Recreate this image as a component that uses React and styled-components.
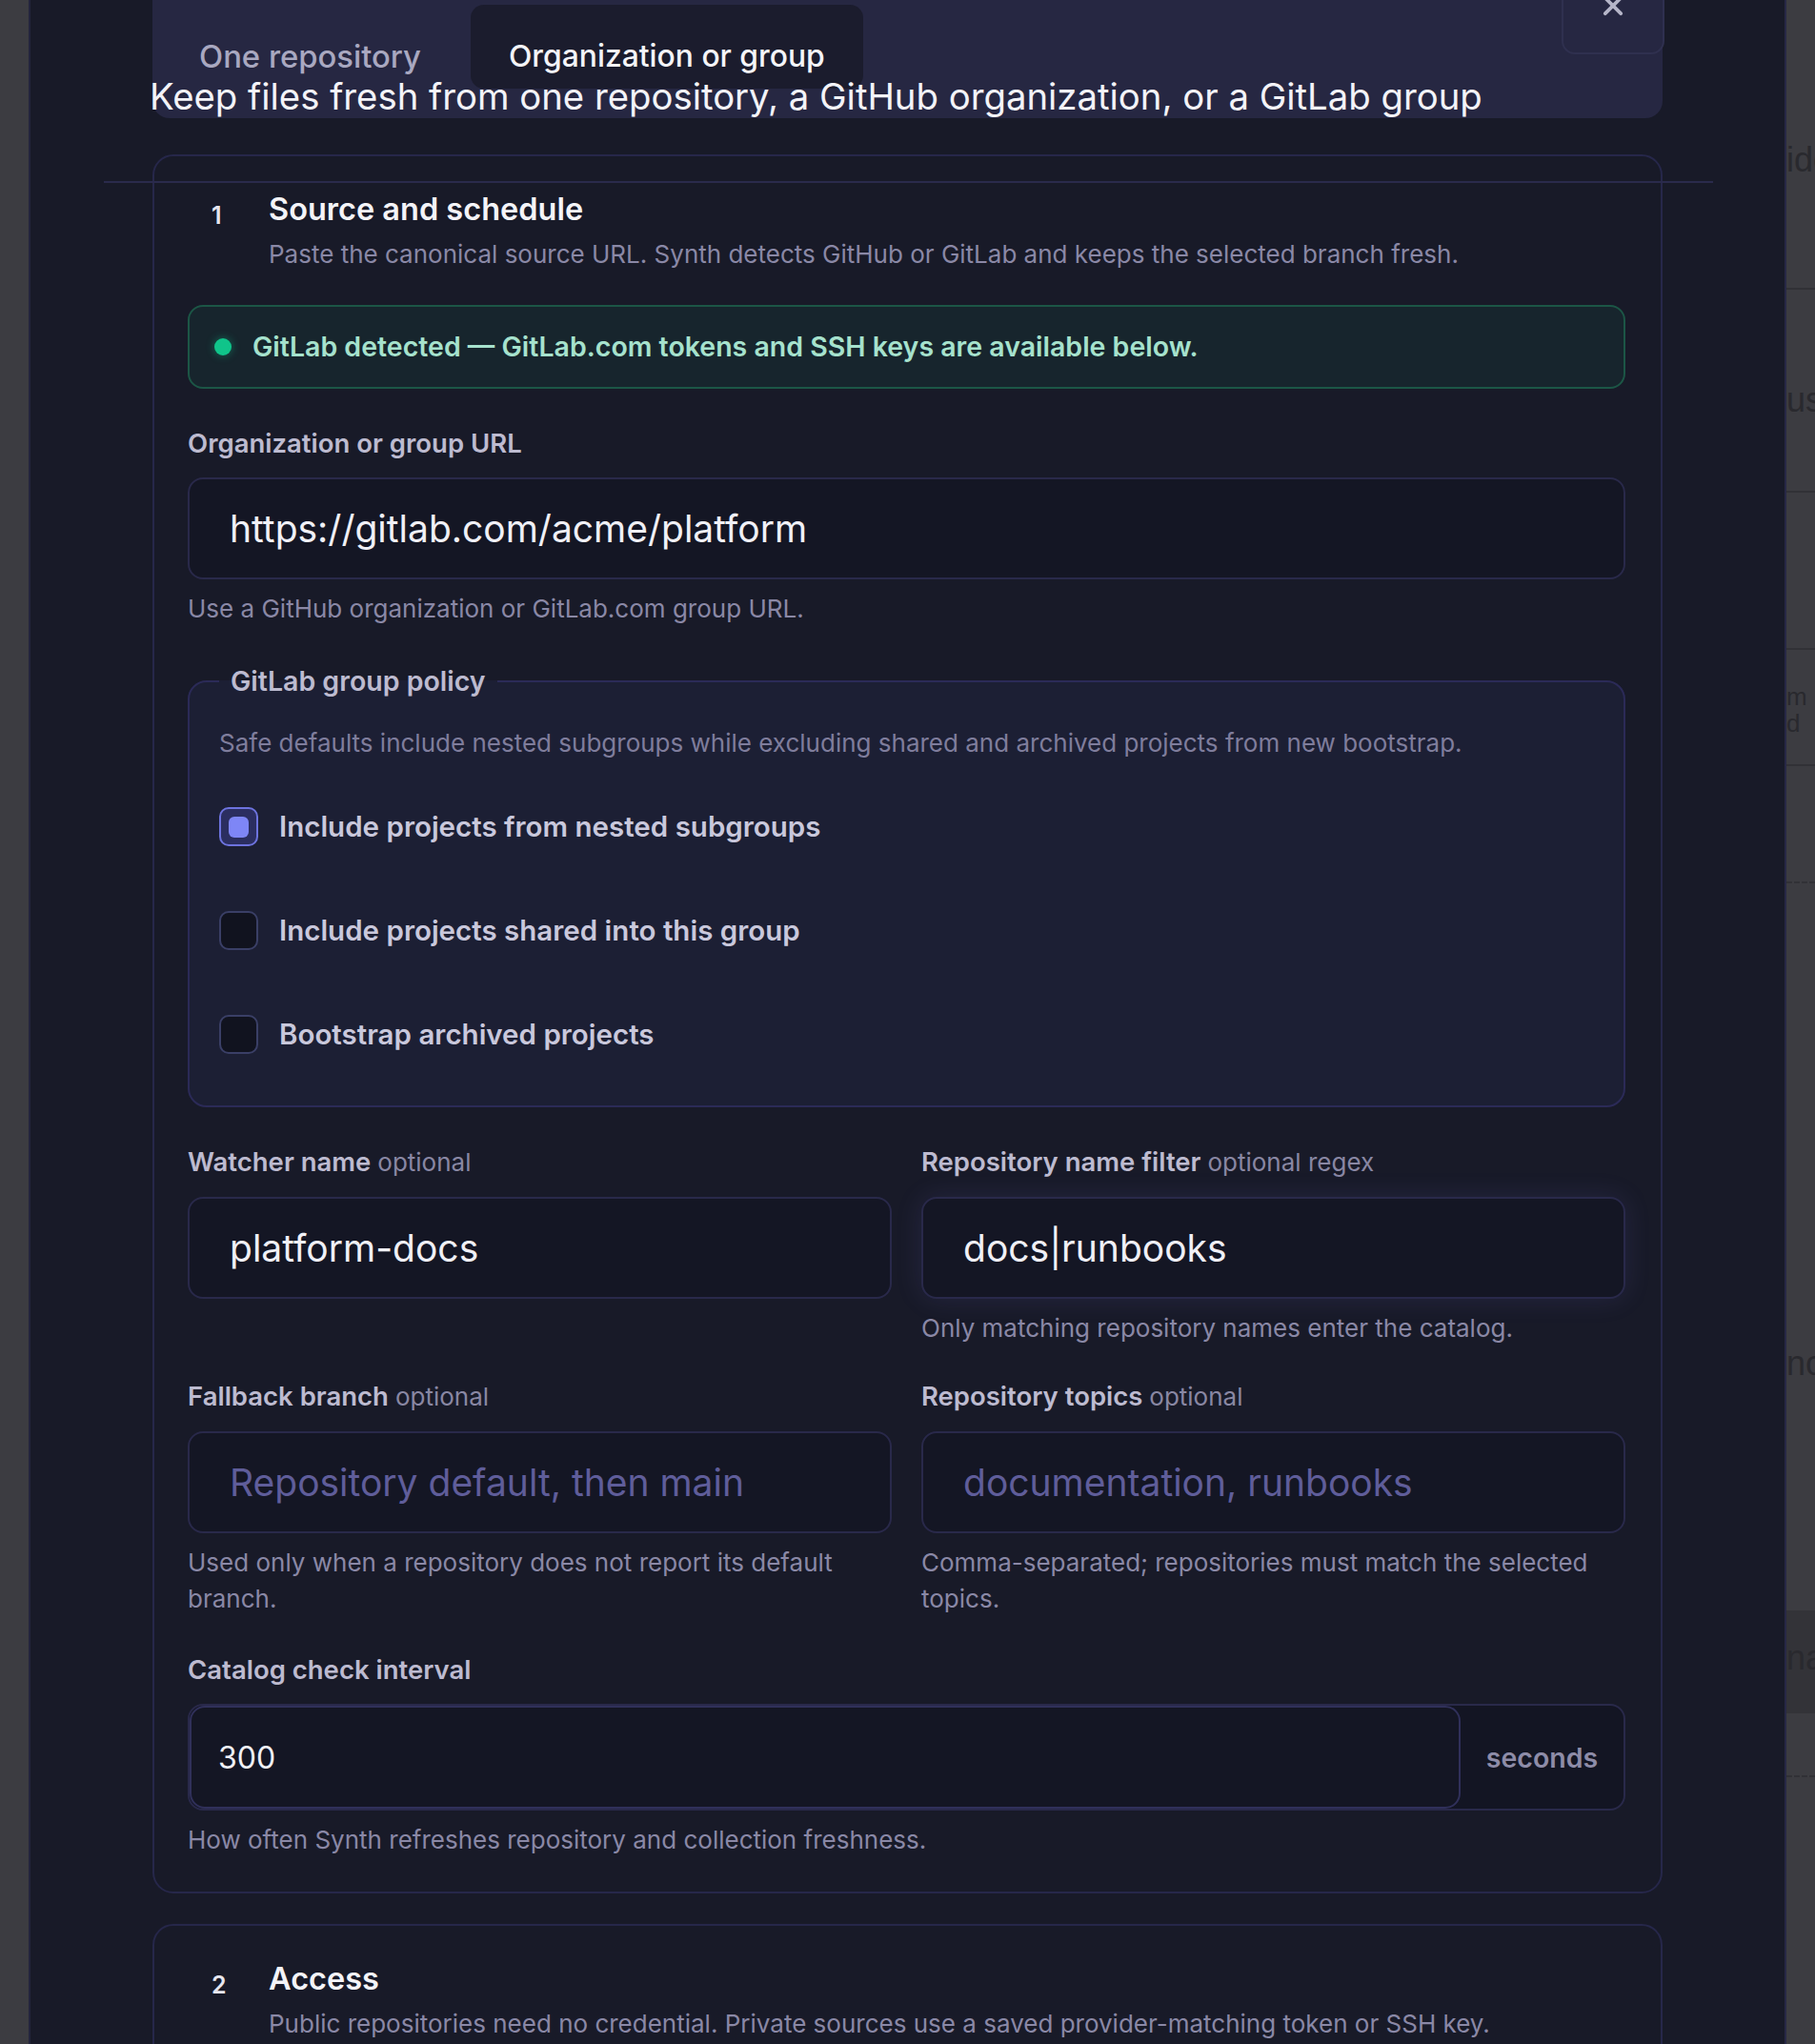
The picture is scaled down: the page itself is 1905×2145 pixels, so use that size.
import React from "react";
import styled, { createGlobalStyle } from "styled-components";

const GlobalStyle = createGlobalStyle`
  * { box-sizing: border-box; }
  html, body { margin: 0; padding: 0; }
  body {
    background: #3c3c41;
    font-family: Inter, "Noto Sans", sans-serif;
    -webkit-font-smoothing: antialiased;
  }
`;

const Page = styled.div`
  display: flex;
  height: 2145px;
  overflow: hidden;
`;

const Gutter = styled.div`
  width: 30px;
  flex: none;
  background: #3c3c41;
`;

const Modal = styled.div`
  position: relative;
  width: 1845px;
  flex: none;
  height: 2145px;
  overflow: hidden;
  background: #181a28;
  border-left: 2px solid #23243c;
  border-right: 2px solid #272846;
  padding: 0 128px;
`;

const HeaderRule = styled.div`
  position: absolute;
  top: 190px;
  left: 77px;
  width: 1689px;
  height: 2px;
  background: #2a2a4c;
`;

const Header = styled.header`
  display: grid;
  grid-template-columns: 1fr auto;
  background: #262742;
  border-radius: 0 0 18px 18px;
`;

const HeaderMain = styled.div`
  min-width: 0;
`;

const TabList = styled.div`
  display: flex;
  gap: 12px;
  margin: 5px 0 0 9px;
`;

const Tab = styled.button`
  padding: 34px 40px 14px;
  border: 0;
  border-radius: 14px;
  background: ${(p) => (p.$active ? "#1b1c2d" : "transparent")};
  color: ${(p) => (p.$active ? "#f4f4f8" : "#a9a8c0")};
  font: 500 ${(p) => (p.$active ? 31.8 : 32.8)}px/40px Inter, sans-serif;
  cursor: pointer;
`;

const Subtitle = styled.p`
  margin: -15px 0 0 -3px;
  font: 400 38.3px/46px Inter, sans-serif;
  color: #f3f3f8;
  white-space: nowrap;
`;

const CloseButton = styled.button`
  width: 108px;
  height: 102px;
  margin: -45px -2px 0 0;
  display: flex;
  align-items: center;
  justify-content: center;
  background: #262742;
  border: 2px solid #2f304f;
  border-radius: 14px;
  color: #b5b5c8;
  cursor: pointer;
`;

const Section = styled.section`
  margin-top: ${(p) => p.$mt}px;
  border: 2px solid #26274a;
  border-radius: 22px;
  padding: 37px 37px 35px 35px;
`;

const StepHead = styled.div`
  display: grid;
  grid-template-columns: 60px 1fr;
  margin-left: 25px;
`;

const StepNum = styled.span`
  padding-top: 6px;
  font: 600 25px/38px Inter, sans-serif;
  color: #e6e6ef;
`;

const StepTitle = styled.h2`
  margin: 0;
  font: 600 32.5px/38px Inter, sans-serif;
  color: #f4f4f8;
`;

const StepDesc = styled.p`
  margin: 10px 0 0;
  font: 400 26px/36px Inter, sans-serif;
  color: #8a88a6;
`;

const Detected = styled.div`
  margin-top: 35px;
  height: 88px;
  display: flex;
  align-items: center;
  gap: 22px;
  padding: 0 26px;
  border: 2px solid #1c5646;
  border-radius: 16px;
  background: #17252d;
  color: #a6e2cd;
  font: 600 28.5px/34px Inter, sans-serif;
`;

const Dot = styled.span`
  width: 18px;
  height: 18px;
  flex: none;
  border-radius: 50%;
  background: #10c48a;
  box-shadow: 0 0 10px rgba(16, 196, 138, 0.45);
`;

const Field = styled.div`
  display: flex;
  flex-direction: column;
  margin-top: ${(p) => p.$mt || 0}px;
`;

const Label = styled.label`
  font: 600 27.5px/34px Inter, sans-serif;
  color: #bdbbd0;
`;

const Optional = styled.span`
  font-weight: 400;
  font-size: 26px;
  color: #8987a3;
`;

const Input = styled.input`
  margin-top: 19px;
  height: 107px;
  width: 100%;
  padding: 0 42px;
  border: 2px solid #29294a;
  border-radius: 16px;
  background: #141624;
  color: #f0f0f6;
  font: 400 39px Inter, sans-serif;
  outline: none;
  box-shadow: ${(p) =>
    p.$focus ? "0 0 28px rgba(120, 116, 220, 0.14)" : "none"};
  &::placeholder {
    color: #5f5d9a;
  }
`;

const Hint = styled.p`
  margin: 12px 0 0;
  font: 400 26px/38px Inter, sans-serif;
  color: #8a88a6;
`;

const Policy = styled.fieldset`
  margin: 40px 0 0;
  padding: 30px 31px 54px;
  border: 2px solid #2b2a57;
  border-radius: 20px;
  background: #1c1f34;
`;

const Legend = styled.legend`
  padding: 0 12px;
  font: 600 28.5px/34px Inter, sans-serif;
  color: #bdbbd0;
`;

const PolicyDesc = styled.p`
  margin: 0 0 49px;
  font: 400 26px/36px Inter, sans-serif;
  color: #7f7d9c;
`;

const CheckList = styled.div`
  display: flex;
  flex-direction: column;
  gap: 68px;
`;

const CheckRow = styled.label`
  display: flex;
  align-items: center;
  gap: 22px;
  font: 600 29.5px/41px Inter, sans-serif;
  color: #c9c8dc;
`;

const Box = styled.span`
  width: 41px;
  height: 41px;
  flex: none;
  display: flex;
  align-items: center;
  justify-content: center;
  border: 2px solid ${(p) => (p.$checked ? "#6d73de" : "#3a3f66")};
  border-radius: 10px;
  background: ${(p) => (p.$checked ? "#2b2e60" : "#11131f")};
`;

const BoxFill = styled.span`
  width: 21px;
  height: 22px;
  border-radius: 6px;
  background: #7e86f6;
`;

const Grid = styled.div`
  margin-top: 40px;
  display: grid;
  grid-template-columns: 1fr 1fr;
  column-gap: 31px;
  row-gap: 35px;
  align-items: start;
`;

const Group = styled.div`
  margin-top: 19px;
  height: 112px;
  display: flex;
  border: 2px solid #29294a;
  border-radius: 16px;
  background: #131523;
`;

const GroupInput = styled.input`
  flex: 1;
  min-width: 0;
  height: 108px;
  padding: 0 28px;
  border: 2px solid #30305a;
  border-radius: 16px;
  background: #141624;
  color: #f0f0f6;
  font: 400 32px Inter, sans-serif;
  outline: none;
`;

const Addon = styled.span`
  width: 171px;
  display: flex;
  align-items: center;
  justify-content: center;
  font: 600 28.5px Inter, sans-serif;
  color: #8e8ca8;
`;

const Peek = styled.aside`
  flex: 1;
  display: flex;
  flex-direction: column;
  overflow: hidden;
  color: #29292e;
  font: 400 36px/40px "Liberation Sans", Arial, sans-serif;
`;

const PeekRow = styled.div`
  flex: none;
  height: ${(p) => p.$h}px;
  padding-top: ${(p) => p.$pt || 0}px;
  border-bottom: 2px ${(p) => (p.$dashed ? "dashed" : "solid")}
    ${(p) => (p.$line ? "#313136" : "transparent")};
  background: ${(p) => (p.$dark ? "#333338" : "transparent")};
  white-space: nowrap;
  font-size: ${(p) => p.$fs || 36}px;
  line-height: ${(p) => p.$lh || 40}px;
`;

const CloseIcon = () => (
  <svg width="28" height="28" viewBox="0 0 24 24" fill="none">
    <path
      d="M5 5l14 14M19 5L5 19"
      stroke="currentColor"
      strokeWidth="3.2"
      strokeLinecap="round"
    />
  </svg>
);

const Check = ({ checked, children }) => (
  <CheckRow>
    <Box $checked={checked}>{checked && <BoxFill />}</Box>
    {children}
  </CheckRow>
);

export default function App() {
  return (
    <>
      <GlobalStyle />
      <Page>
        <Gutter />
        <Modal>
          <Header>
            <HeaderMain>
              <TabList>
                <Tab>One repository</Tab>
                <Tab $active>Organization or group</Tab>
              </TabList>
              <Subtitle>
                Keep files fresh from one repository, a GitHub organization, or
                a GitLab group
              </Subtitle>
            </HeaderMain>
            <CloseButton aria-label="Close">
              <CloseIcon />
            </CloseButton>
          </Header>

          <Section $mt={38}>
            <StepHead>
              <StepNum>1</StepNum>
              <div>
                <StepTitle>Source and schedule</StepTitle>
                <StepDesc>
                  Paste the canonical source URL. Synth detects GitHub or
                  GitLab and keeps the selected branch fresh.
                </StepDesc>
              </div>
            </StepHead>

            <Detected>
              <Dot />
              GitLab detected — GitLab.com tokens and SSH keys are available
              below.
            </Detected>

            <Field $mt={40}>
              <Label>Organization or group URL</Label>
              <Input readOnly value="https://gitlab.com/acme/platform" />
              <Hint>Use a GitHub organization or GitLab.com group URL.</Hint>
            </Field>

            <Policy>
              <Legend>GitLab group policy</Legend>
              <PolicyDesc>
                Safe defaults include nested subgroups while excluding shared
                and archived projects from new bootstrap.
              </PolicyDesc>
              <CheckList>
                <Check checked>Include projects from nested subgroups</Check>
                <Check>Include projects shared into this group</Check>
                <Check>Bootstrap archived projects</Check>
              </CheckList>
            </Policy>

            <Grid>
              <Field>
                <Label>
                  Watcher name <Optional>optional</Optional>
                </Label>
                <Input readOnly value="platform-docs" />
              </Field>
              <Field>
                <Label>
                  Repository name filter <Optional>optional regex</Optional>
                </Label>
                <Input readOnly $focus value="docs|runbooks" />
                <Hint>Only matching repository names enter the catalog.</Hint>
              </Field>
              <Field>
                <Label>
                  Fallback branch <Optional>optional</Optional>
                </Label>
                <Input readOnly placeholder="Repository default, then main" />
                <Hint>
                  Used only when a repository does not report its default
                  branch.
                </Hint>
              </Field>
              <Field>
                <Label>
                  Repository topics <Optional>optional</Optional>
                </Label>
                <Input readOnly placeholder="documentation, runbooks" />
                <Hint>
                  Comma-separated; repositories must match the selected topics.
                </Hint>
              </Field>
            </Grid>

            <Field $mt={38}>
              <Label>Catalog check interval</Label>
              <Group>
                <GroupInput readOnly value="300" />
                <Addon>seconds</Addon>
              </Group>
              <Hint>
                How often Synth refreshes repository and collection freshness.
              </Hint>
            </Field>
          </Section>

          <Section $mt={32}>
            <StepHead>
              <StepNum>2</StepNum>
              <div>
                <StepTitle>Access</StepTitle>
                <StepDesc>
                  Public repositories need no credential. Private sources use a
                  saved provider-matching token or SSH key.
                </StepDesc>
              </div>
            </StepHead>
          </Section>

          <HeaderRule />
        </Modal>
        <Peek>
          <PeekRow $h={304} $pt={148} $line>
            ide
          </PeekRow>
          <PeekRow $h={213} $pt={96} $line>
            us
          </PeekRow>
          <PeekRow $h={165} $line />
          <PeekRow $h={122} $pt={35} $fs={26} $lh={28} $line>
            m<br />d
          </PeekRow>
          <PeekRow $h={123} $line $dashed />
          <PeekRow $h={763} $pt={484}>
            no
          </PeekRow>
          <PeekRow $h={108} $pt={30} $dark>
            na
          </PeekRow>
          <PeekRow $h={67} $line $dashed />
        </Peek>
      </Page>
    </>
  );
}
